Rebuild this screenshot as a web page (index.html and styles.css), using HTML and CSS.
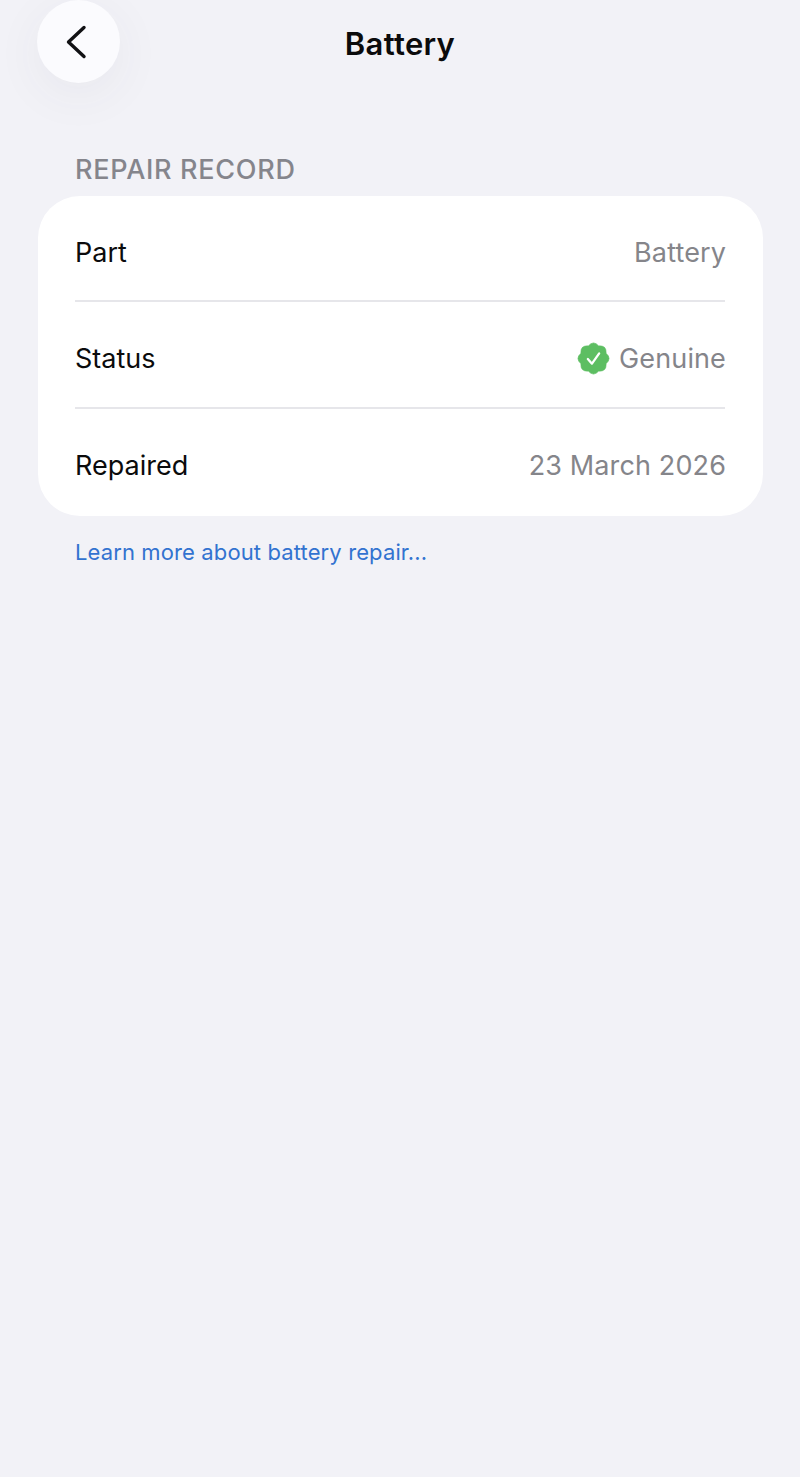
FILE: index.html
```html
<!DOCTYPE html>
<html lang="en">
<head>
<meta charset="utf-8">
<title>Battery</title>
<link rel="stylesheet" href="styles.css">
</head>
<body>
<header class="nav">
  <button class="back" aria-label="Back">
    <svg class="back-icon" width="24" height="36" viewBox="0 0 24 36"><path d="M20 3.5 4.5 18 20 32.5"/></svg>
  </button>
  <h1 class="title">Battery</h1>
</header>
<main class="content">
  <h2 class="section">REPAIR RECORD</h2>
  <section class="card">
    <div class="row"><span class="label">Part</span><span class="value">Battery</span></div>
    <div class="row"><span class="label">Status</span><span class="value value-badge">
      <svg class="badge" width="33" height="33" viewBox="0 0 32 32"><path class="badge-shape" d="M10.95 3.8Q16-2 21.05 3.8 28.8 3.2 28.2 10.95 34 16 28.2 21.05 28.8 28.8 21.05 28.2 16 34 10.95 28.2 3.2 28.8 3.8 21.05-2 16 3.8 10.95 3.2 3.2 10.95 3.8Z"/><path class="badge-check" d="M10.5 16.5 14.5 21 21.5 11"/></svg>
      Genuine</span></div>
    <div class="row"><span class="label">Repaired</span><span class="value">23 March 2026</span></div>
  </section>
  <a class="link" href="#">Learn more about battery repair...</a>
</main>
</body>
</html>
```
FILE: styles.css
```css
* { box-sizing: border-box; }
html, body { margin: 0; height: 100%; }
body {
  background: #f2f2f7;
  font-family: Inter, "Liberation Sans", sans-serif;
  color: #0b0b0c;
  overflow: hidden;
}
.nav {
  display: grid;
  grid-template-columns: 83px 1fr 83px;
  align-items: center;
  height: 83px;
  padding: 0 37px;
}
.back {
  width: 83px;
  height: 83px;
  padding: 0 6px 0 0;
  border: 0;
  border-radius: 50%;
  background: #fbfbfe;
  box-shadow: 0 12px 50px rgba(60, 60, 80, 0.06);
  display: flex;
  align-items: center;
  justify-content: center;
}
.back-icon path {
  fill: none;
  stroke: #111114;
  stroke-width: 3.4;
  stroke-linecap: round;
  stroke-linejoin: round;
}
.title {
  margin: 4px 0 0;
  text-align: center;
  font-size: 31px;
  font-weight: 600;
  letter-spacing: 0.3px;
}
.content { padding: 0 37px 0 38px; }
.section {
  margin: 69px 0 9px 37px;
  font-size: 27px;
  line-height: 35px;
  font-weight: 500;
  letter-spacing: 0.7px;
  color: #85858c;
}
.card {
  background: #fff;
  border-radius: 42px;
  padding: 0 38px 0 37px;
  height: 320px;
}
.row {
  height: 107px;
  padding-top: 8px;
  display: flex;
  align-items: center;
  justify-content: space-between;
  font-size: 27px;
  border-bottom: 2px solid #e6e6ea;
}
.row:first-child { height: 106px; }
.row:last-child { border-bottom: 0; padding-top: 6px; }
.value { color: #85858a; letter-spacing: 0.12px; margin-right: -1px; }
.value-badge { display: flex; align-items: center; gap: 9px; }
.badge-shape {
  fill: #5dbe62;
  stroke: #5dbe62;
  stroke-width: 0.6;
  stroke-linejoin: round;
}
.badge-check {
  fill: none;
  stroke: #fff;
  stroke-width: 2.2;
  stroke-linecap: round;
  stroke-linejoin: round;
}
.link {
  display: block;
  margin: 22px 0 0 37px;
  font-size: 22px;
  line-height: 29px;
  letter-spacing: 0.12px;
  color: #3273d0;
  text-decoration: none;
}
```
